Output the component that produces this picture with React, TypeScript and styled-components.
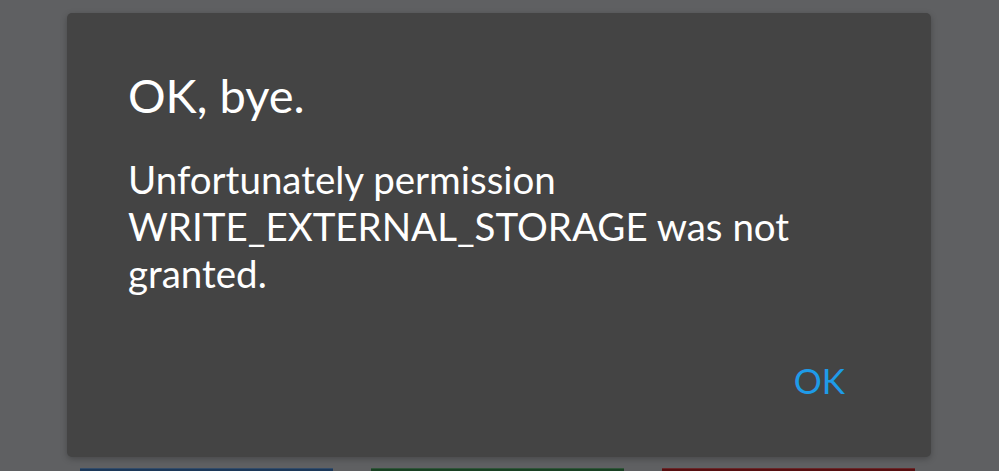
import React from 'react';
import styled, { createGlobalStyle } from 'styled-components';

const GlobalStyle = createGlobalStyle`
  html, body {
    margin: 0;
    padding: 0;
    background: #5f6062;
    overflow: hidden;
  }
  body {
    font-family: Lato, "Liberation Sans", sans-serif;
  }
`;

function App() {
  return (
    <Page>
      <GlobalStyle />
      <Dialog>
        <Title>OK, bye.</Title>
        <Message>
          Unfortunately permission WRITE_EXTERNAL_STORAGE was not granted.
        </Message>
        <Actions>
          <ActionButton>OK</ActionButton>
        </Actions>
      </Dialog>
      <ButtonRow>
        <ColorBar color="#1c3859" />
        <ColorBar color="#194123" />
        <ColorBar color="#570f11" />
      </ButtonRow>
    </Page>
  );
}

const Page = styled.div`
  width: 999px;
  height: 471px;
  overflow: hidden;
  padding-top: 13px;
  box-sizing: border-box;
  display: flex;
  flex-direction: column;
`;

const Dialog = styled.div`
  flex-shrink: 0;
  margin: 0 68px 0 67px;
  height: 444px;
  box-sizing: border-box;
  padding: 54px 86px 0 61px;
  background: #444444;
  border-radius: 5px;
  box-shadow: 0 2px 6px rgba(0, 0, 0, 0.25);
  display: flex;
  flex-direction: column;
`;

const Title = styled.h1`
  margin: 0;
  font-size: 47px;
  font-weight: 400;
  line-height: 56px;
  color: #ffffff;
`;

const Message = styled.p`
  margin: 33px 0 0;
  font-size: 38.5px;
  line-height: 47px;
  color: #ffffff;
`;

const Actions = styled.div`
  display: flex;
  justify-content: flex-end;
  margin-top: 63px;
`;

const ActionButton = styled.button`
  border: none;
  background: none;
  padding: 0;
  font-family: inherit;
  font-size: 35px;
  line-height: 40px;
  color: #1e9be8;
`;

const ButtonRow = styled.div`
  flex-shrink: 0;
  display: flex;
  gap: 38px;
  margin: 11px 0 0 80px;
`;

const ColorBar = styled.div<{ color: string }>`
  width: 253px;
  height: 40px;
  background: ${(p) => p.color};
  border-top: 1px solid rgba(255, 255, 255, 0.1);
`;

export default App;
